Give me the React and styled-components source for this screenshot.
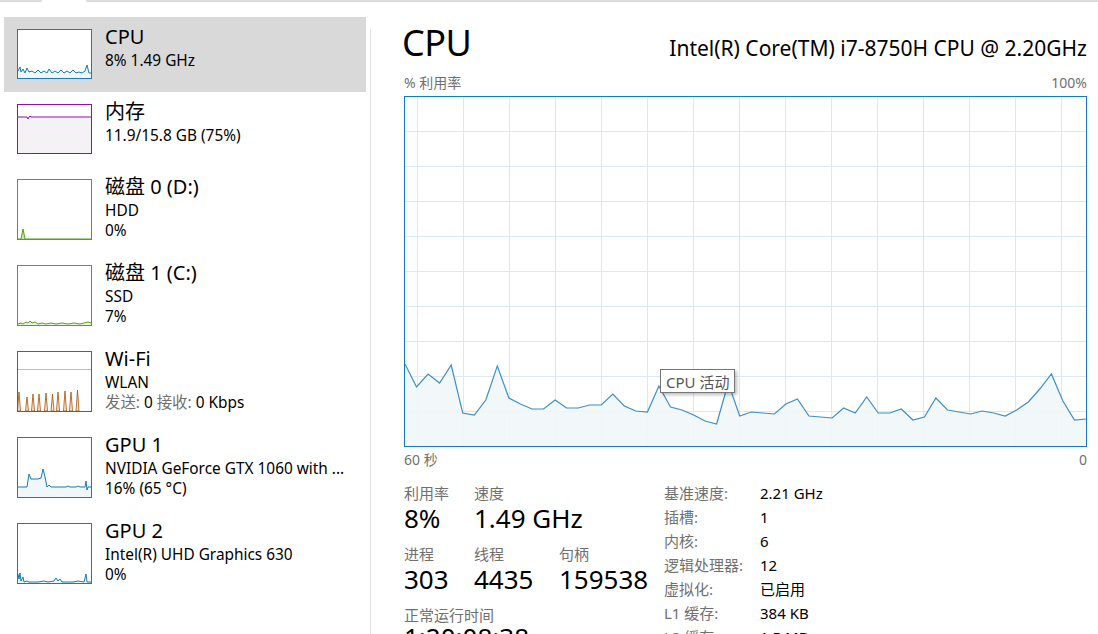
import React from 'react';
import styled, { createGlobalStyle } from 'styled-components';

const FONT = `"Segoe UI", "Noto Sans", "Noto Sans CJK SC", sans-serif`;

const GlobalStyle = createGlobalStyle`
  html, body {
    margin: 0;
    padding: 0;
    background: #ffffff;
    overflow: hidden;
  }
  body {
    font-family: ${FONT};
    color: #000000;
  }
`;

const Window = styled.div`
  width: 1098px;
  height: 634px;
  overflow: hidden;
  display: flex;
  flex-direction: column;
  background: #ffffff;
`;

const TopBar = styled.div`
  display: flex;
  height: 2px;
  flex-shrink: 0;
`;

const Rule = styled.div`
  width: ${p => p.$w || 'auto'};
  flex: ${p => (p.$w ? '0 0 auto' : '1')};
  background: ${p => (p.$gap ? 'transparent' : '#dddddd')};
`;

const Body = styled.div`
  flex: 1;
  display: flex;
  min-height: 0;
`;

/* ---------- sidebar ---------- */

const Sidebar = styled.div`
  width: 370px;
  flex-shrink: 0;
  padding-top: 15px;
  box-sizing: border-box;
`;

const Divider = styled.div`
  width: 1px;
  margin-top: 27px;
  background: #e3e3e3;
  flex-shrink: 0;
`;

const Item = styled.div`
  display: flex;
  align-items: flex-start;
  margin-left: 4px;
  width: 362px;
  padding: 5px 0 0 13px;
  box-sizing: border-box;
  background: ${p => (p.$active ? '#d9d9d9' : 'transparent')};
`;

const Thumb = styled.div`
  width: 75px;
  height: ${p => (p.$tall ? 61 : 50)}px;
  margin: 7px 0 13px;
  box-sizing: border-box;
  border: 1px solid ${p => p.$color};
  background: #ffffff;
  flex-shrink: 0;

  svg {
    display: block;
    width: 100%;
    height: 100%;
  }
`;

const ItemText = styled.div`
  margin-left: 13px;
  min-width: 0;
  flex: 1;
`;

const ItemTitle = styled.div`
  font-size: 20px;
  line-height: 29px;
  white-space: nowrap;
`;

const ItemSub = styled.div`
  font-size: 15.4px;
  line-height: 20px;
  white-space: nowrap;
  overflow: hidden;
`;

const Dim = styled.span`
  color: #707070;
`;

/* ---------- main panel ---------- */

const Main = styled.div`
  flex: 1;
  padding: 0 11px 0 33px;
  min-width: 0;
`;

const Header = styled.div`
  display: flex;
  align-items: baseline;
  justify-content: space-between;
  margin-top: 19px;
  height: 44px;
`;

const BigTitle = styled.div`
  font-size: 36px;
  line-height: 44px;
  letter-spacing: -0.5px;
  margin-left: -2px;
`;

const Model = styled.div`
  font-size: 21px;
  line-height: 24px;
`;

const AxisRow = styled.div`
  display: flex;
  justify-content: space-between;
  font-size: 14px;
  line-height: 18px;
  color: #707070;
  margin-top: ${p => p.$top || 0}px;
`;

const ChartBox = styled.div`
  position: relative;
  height: 351px;
  box-sizing: border-box;
  border: 1px solid #117dbb;
  margin-top: 4px;

  svg {
    display: block;
    width: 100%;
    height: 100%;
  }
`;

const Tooltip = styled.div`
  position: absolute;
  left: 255px;
  top: 272px;
  height: 24px;
  padding: 0 5px;
  box-sizing: border-box;
  display: flex;
  align-items: center;
  background: #ffffff;
  border: 1px solid #767676;
  box-shadow: 2px 2px 3px rgba(0, 0, 0, 0.25);
  font-size: 15px;
  color: #575757;
  white-space: nowrap;
`;

const Stats = styled.div`
  display: flex;
  margin-top: 12px;
`;

const LeftStats = styled.div`
  width: 260px;
  padding-top: 2px;
  flex-shrink: 0;
`;

const StatGroup = styled.div`
  display: grid;
  grid-template-columns: 70px 85px auto;
  margin-bottom: 11px;
`;

const StatLabel = styled.div`
  font-size: 15px;
  line-height: 20px;
  color: #707070;
  white-space: nowrap;
  grid-column: ${p => (p.$wide ? '1 / 4' : 'auto')};
`;

const StatValue = styled.div`
  font-size: 26px;
  line-height: 30px;
  white-space: nowrap;
  grid-column: ${p => (p.$wide ? '1 / 4' : 'auto')};
  margin-top: ${p => (p.$wide ? -3 : 0)}px;
`;

const InfoTable = styled.div`
  display: grid;
  grid-template-columns: 96px auto;
  grid-auto-rows: 24px;
  font-size: 15px;
  line-height: 24px;
`;

const InfoKey = styled.div`
  color: #707070;
  white-space: nowrap;
`;

const InfoVal = styled.div`
  white-space: nowrap;
`;

/* ---------- data ---------- */

const cpuSeries = [
  364, 387, 374, 383, 365, 413, 415, 400, 366, 398,
  404, 409, 409, 400, 408, 408, 405, 405, 394, 406,
  411, 412, 386, 407, 410, 415, 421, 424, 383, 416,
  412, 413, 414, 404, 399, 416, 417, 418, 408, 413,
  397, 413, 413, 409, 420, 417, 398, 410, 412, 414,
  411, 413, 416, 410, 402, 389, 374, 401, 420, 419,
].map(y => y - 96);

const toPts = arr => arr.map(([x, y]) => `${x},${y}`).join(' ');

function MiniGraph({ w = 73, h, line, fill, pts }) {
  const area = `0,${h} ${toPts(pts)} ${w},${h}`;
  return (
    <svg viewBox={`0 0 ${w} ${h}`} preserveAspectRatio="none">
      <polygon points={area} fill={fill} />
      <polyline points={toPts(pts)} fill="none" stroke={line} strokeWidth="1" />
    </svg>
  );
}

function CpuChart() {
  const W = 681;
  const H = 349;
  const vLines = Array.from({ length: 15 }, (_, k) => 12 + 46 * k);
  const hLines = Array.from({ length: 9 }, (_, k) => 35 * (k + 1) - 1);
  const pts = cpuSeries.map((y, i) => `${((i * W) / 59).toFixed(1)},${y - 1}`).join(' ');
  return (
    <svg viewBox={`0 0 ${W} ${H}`} preserveAspectRatio="none">
      {vLines.map(x => (
        <line key={'v' + x} x1={x + 0.5} y1="0" x2={x + 0.5} y2={H} stroke="#d9eaf4" strokeWidth="1" />
      ))}
      {hLines.map(y => (
        <line key={'h' + y} x1="0" y1={y + 0.5} x2={W} y2={y + 0.5} stroke="#d9eaf4" strokeWidth="1" />
      ))}
      <polygon points={`0,${H} ${pts} ${W},${H}`} fill="#f1f6fa" fillOpacity="0.9" />
      <polyline points={pts} fill="none" stroke="#3d8fc7" strokeWidth="1.2" />
    </svg>
  );
}

const cpuThumb = [
  [0, 41], [2, 37], [3, 42], [5, 39], [7, 43], [9, 38], [11, 42], [14, 41], [17, 43], [20, 40],
  [23, 43], [26, 41], [29, 43], [31, 39], [34, 43], [37, 41], [40, 43], [43, 40], [46, 43], [49, 41],
  [52, 43], [55, 40], [58, 43], [61, 42], [64, 43], [67, 41], [69, 35], [71, 43], [73, 43],
];

const memThumb = [[0, 12], [9, 12], [10, 14], [11, 12], [12, 11], [13, 12], [73, 12]];

const disk0Thumb = [[0, 59], [3, 59], [5, 49], [7, 59], [73, 59]];

const disk1Thumb = [
  [0, 58], [3, 57], [5, 58], [8, 56], [10, 57], [12, 55], [14, 57], [17, 56], [20, 58], [24, 57],
  [28, 58], [33, 57], [38, 58], [44, 57], [50, 58], [56, 57], [62, 58], [66, 57], [70, 56], [73, 57],
];

const gpu1Thumb = [
  [0, 49], [9, 49], [11, 36], [13, 41], [20, 41], [23, 40], [25, 31], [27, 39], [29, 49], [31, 47],
  [33, 49], [48, 49], [50, 48], [52, 49], [58, 49], [60, 48], [62, 49], [67, 49], [68, 43], [69, 52],
  [70, 49], [73, 49],
];

const gpu2Thumb = [
  [0, 50], [1, 55], [2, 49], [3, 57], [5, 53], [6, 58], [9, 57], [11, 58], [20, 58], [26, 57],
  [30, 58], [36, 57], [38, 54], [40, 57], [42, 55], [44, 58], [55, 58], [60, 57], [66, 58], [68, 50],
  [69, 58], [73, 58],
];

function WifiGraph() {
  const spikes = [1, 9, 15, 21, 28, 34.5, 40, 47, 53, 59.5];
  const peaks = [40, 45, 42, 42, 41, 42, 40, 39, 40, 38];
  return (
    <svg viewBox="0 0 73 59" preserveAspectRatio="none">
      <line x1="0" y1="17.5" x2="73" y2="17.5" stroke="#dcb497" strokeWidth="1" />
      {spikes.map((x, i) => (
        <polygon
          key={i}
          points={`${x - 1.5},59 ${x},${peaks[i]} ${x + 1.5},59`}
          fill="#f6ebe2"
          stroke="#a74f01"
          strokeWidth="0.8"
        />
      ))}
    </svg>
  );
}

const items = [
  {
    title: 'CPU',
    subs: ['8% 1.49 GHz'],
    color: '#117dbb',
    active: true,
    graph: <MiniGraph h={48} line="#117dbb" fill="#f1f6fa" pts={cpuThumb} />,
  },
  {
    title: '内存',
    subs: ['11.9/15.8 GB (75%)'],
    color: '#8b12ae',
    graph: <MiniGraph h={48} line="#8b12ae" fill="#f4f2f4" pts={memThumb} />,
  },
  {
    title: '磁盘 0 (D:)',
    subs: ['HDD', '0%'],
    color: '#4da60c',
    graph: <MiniGraph h={59} line="#4da60c" fill="#c9e5b4" pts={disk0Thumb} />,
  },
  {
    title: '磁盘 1 (C:)',
    subs: ['SSD', '7%'],
    color: '#4da60c',
    graph: <MiniGraph h={59} line="#4da60c" fill="#eff7e9" pts={disk1Thumb} />,
  },
  {
    title: 'Wi-Fi',
    subs: ['WLAN', <><Dim>发送:</Dim> 0 <Dim>接收:</Dim> 0 Kbps</>],
    color: '#a74f01',
    graph: <WifiGraph />,
  },
  {
    title: 'GPU 1',
    subs: ['NVIDIA GeForce GTX 1060 with ...', '16% (65 °C)'],
    color: '#117dbb',
    graph: <MiniGraph h={59} line="#117dbb" fill="#f1f6fa" pts={gpu1Thumb} />,
  },
  {
    title: 'GPU 2',
    subs: ['Intel(R) UHD Graphics 630', '0%'],
    color: '#117dbb',
    graph: <MiniGraph h={59} line="#117dbb" fill="#f1f6fa" pts={gpu2Thumb} />,
  },
];

const info = [
  ['基准速度:', '2.21 GHz'],
  ['插槽:', '1'],
  ['内核:', '6'],
  ['逻辑处理器:', '12'],
  ['虚拟化:', '已启用'],
  ['L1 缓存:', '384 KB'],
  ['L2 缓存:', '1.5 MB'],
  ['L3 缓存:', '9.0 MB'],
];

export default function App() {
  return (
    <Window>
      <GlobalStyle />
      <TopBar>
        <Rule $w="42px" />
        <Rule $w="44px" $gap />
        <Rule />
      </TopBar>
      <Body>
        <Sidebar>
          {items.map(it => (
            <Item key={it.title} $active={it.active}>
              <Thumb $color={it.color} $tall={it.subs.length > 1}>
                {it.graph}
              </Thumb>
              <ItemText>
                <ItemTitle>{it.title}</ItemTitle>
                {it.subs.map((s, i) => (
                  <ItemSub key={i}>{s}</ItemSub>
                ))}
              </ItemText>
            </Item>
          ))}
        </Sidebar>
        <Divider />
        <Main>
          <Header>
            <BigTitle>CPU</BigTitle>
            <Model>Intel(R) Core(TM) i7-8750H CPU @ 2.20GHz</Model>
          </Header>
          <AxisRow $top={9}>
            <span>% 利用率</span>
            <span>100%</span>
          </AxisRow>
          <ChartBox>
            <CpuChart />
            <Tooltip>CPU 活动</Tooltip>
          </ChartBox>
          <AxisRow $top={4}>
            <span>60 秒</span>
            <span>0</span>
          </AxisRow>
          <Stats>
            <LeftStats>
              <StatGroup>
                <StatLabel>利用率</StatLabel>
                <StatLabel>速度</StatLabel>
                <span />
                <StatValue>8%</StatValue>
                <StatValue>1.49 GHz</StatValue>
                <span />
              </StatGroup>
              <StatGroup>
                <StatLabel>进程</StatLabel>
                <StatLabel>线程</StatLabel>
                <StatLabel>句柄</StatLabel>
                <StatValue>303</StatValue>
                <StatValue>4435</StatValue>
                <StatValue>159538</StatValue>
              </StatGroup>
              <StatGroup>
                <StatLabel $wide>正常运行时间</StatLabel>
                <StatValue $wide>1:20:08:38</StatValue>
              </StatGroup>
            </LeftStats>
            <InfoTable>
              {info.map(([k, v]) => (
                <React.Fragment key={k}>
                  <InfoKey>{k}</InfoKey>
                  <InfoVal>{v}</InfoVal>
                </React.Fragment>
              ))}
            </InfoTable>
          </Stats>
        </Main>
      </Body>
    </Window>
  );
}
